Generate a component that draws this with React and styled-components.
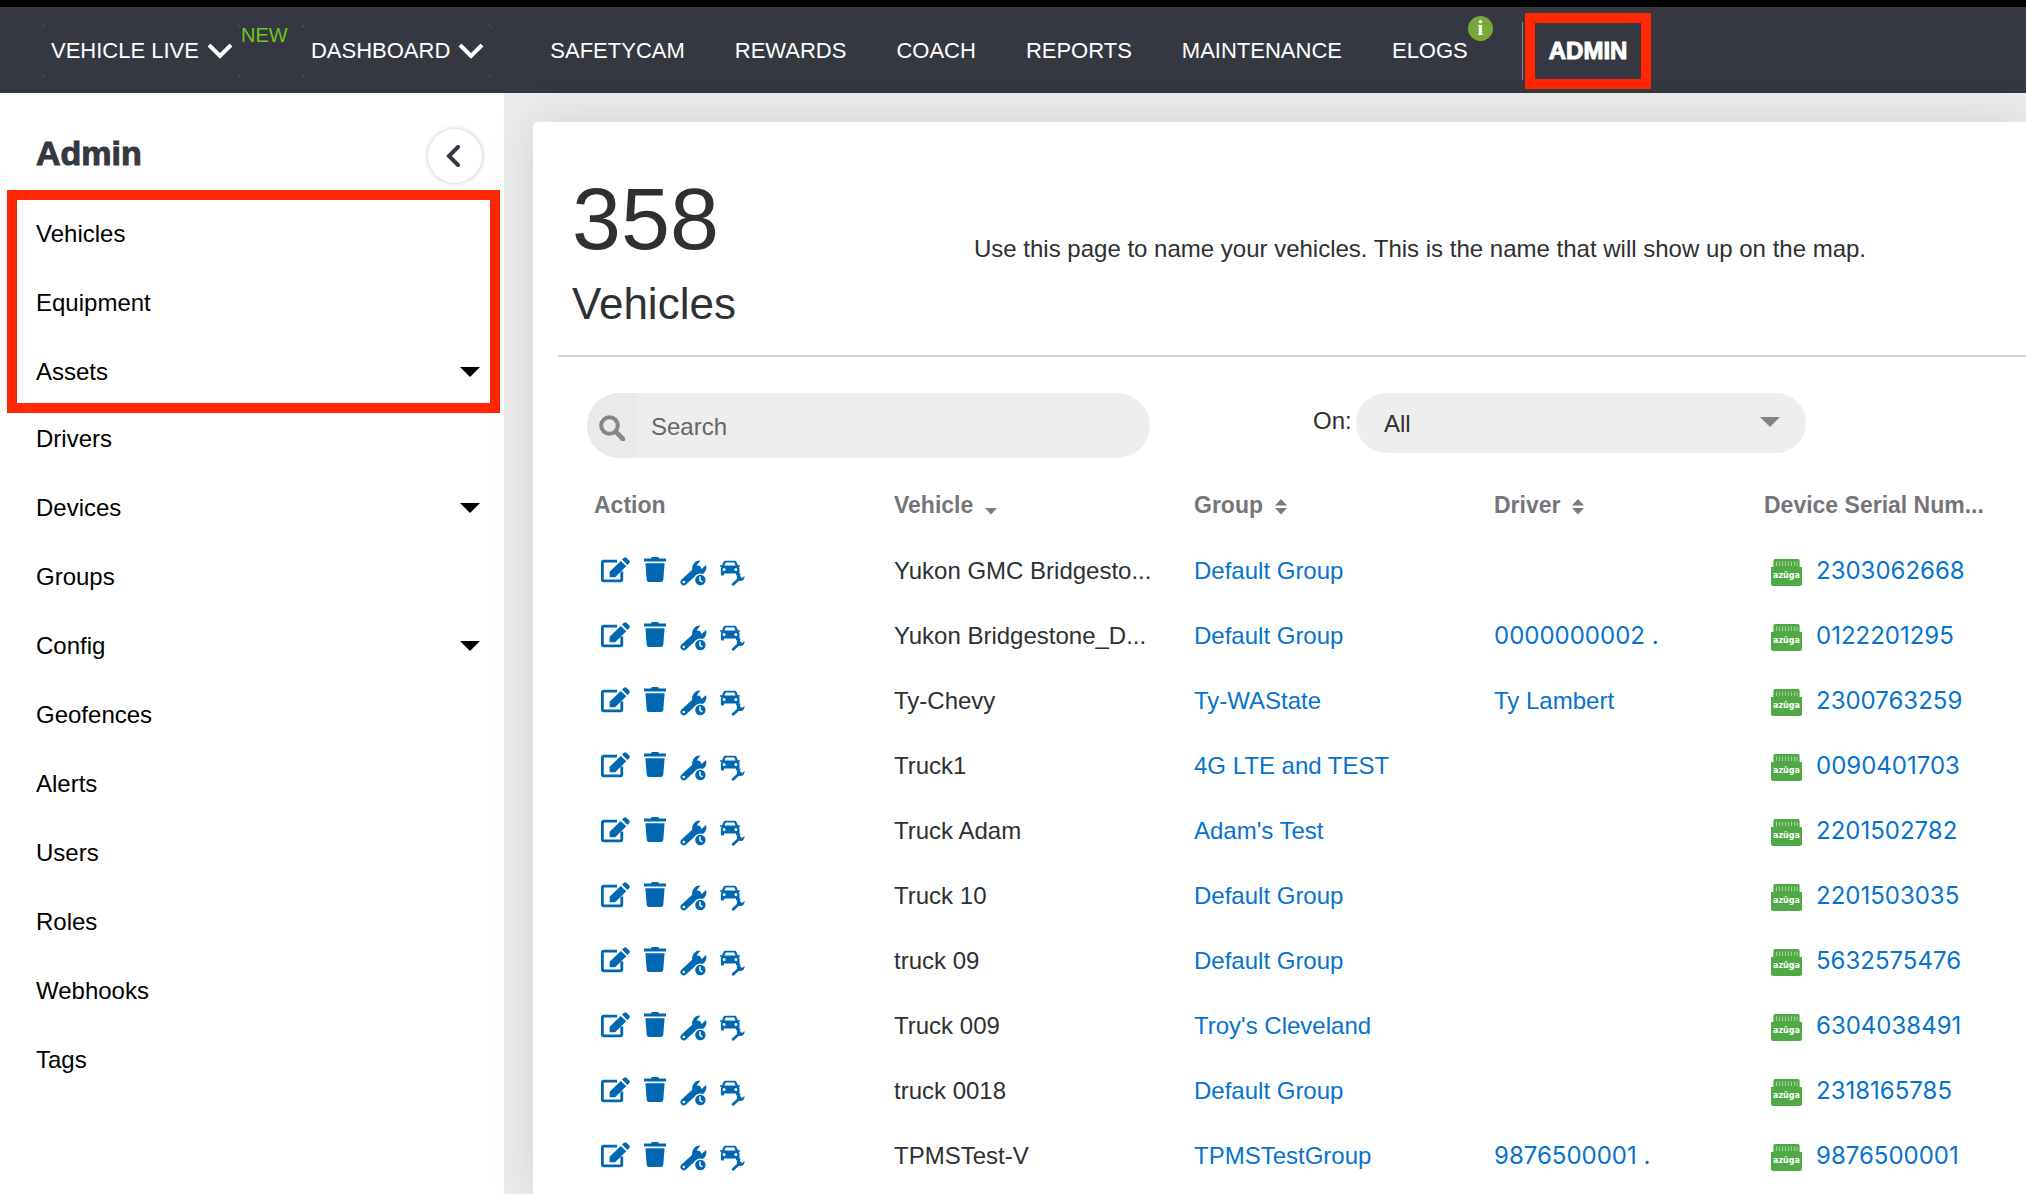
import { useState } from "react";
import styled, { createGlobalStyle } from "styled-components";

const GlobalStyle = createGlobalStyle`
  *, *::before, *::after {
    box-sizing: border-box;
  }

  body {
    margin: 0;
    font-family: "Liberation Sans", Arial, sans-serif;
    font-size: 24px;
    color: #2f3031;
    background: #e6e6e6;
  }

  button, input, select {
    font-family: inherit;
    font-size: inherit;
    color: inherit;
  }

  a {
    color: inherit;
    text-decoration: none;
  }
`;

const Page = styled.div`
  height: 100vh;
  display: flex;
  flex-direction: column;
  overflow: hidden;
`;

const TopBar = styled.nav`
  flex: none;
  height: 93px;
  padding: 2px 0 0 41px;
  display: flex;
  align-items: center;
  border-top: 7px solid #000;
  background: #363841;
  color: #fff;
  font-size: 22px;
  white-space: nowrap;
`;

const MenuButton = styled.button`
  position: relative;
  height: 54px;
  padding: 0 8px 0 10px;
  display: flex;
  align-items: center;
  gap: 8px;
  border: none;
  background: transparent;
  color: inherit;
  cursor: pointer;

  /* only the rounded corners of the outline are visible */
  &::before {
    content: "";
    position: absolute;
    inset: 0;
    border: 1px solid #5d5f67;
    border-radius: 5px;
    mask:
      linear-gradient(#000 0 0) 0 0 / 4px 4px no-repeat,
      linear-gradient(#000 0 0) 100% 0 / 4px 4px no-repeat,
      linear-gradient(#000 0 0) 0 100% / 4px 4px no-repeat,
      linear-gradient(#000 0 0) 100% 100% / 4px 4px no-repeat;
  }
`;

const NewTag = styled.span`
  align-self: flex-start;
  width: 60px;
  padding-top: 15px;
  font-size: 20px;
  line-height: 22px;
  color: #6fc420;
`;

const NavLinks = styled.div`
  margin-left: 58px;
  display: flex;
  align-items: center;
  gap: 50px;
`;

const NavLink = styled.a`
  position: relative;
`;

const InfoBadge = styled.span`
  position: absolute;
  left: 100%;
  top: -22px;
  width: 25px;
  height: 25px;
  border-radius: 50%;
  background: #76a93a;
  font: bold 20px/24px "Liberation Serif", serif;
  text-align: center;
`;

const AdminSlot = styled.div`
  margin-left: 54px;
  padding-left: 3px;
  height: 76px;
  display: flex;
  background: linear-gradient(#8a8b90 0 0) 0 50% / 1px 58px no-repeat;
`;

const AdminLink = styled.a`
  padding: 0 14px;
  display: flex;
  align-items: center;
  border: 10px solid #ff2803;
  font-size: 24px;
  font-weight: bold;
  -webkit-text-stroke: 1px #fff;
`;

const Body = styled.div`
  flex: 1;
  min-height: 0;
  display: flex;
`;

const Sidebar = styled.aside`
  flex: none;
  width: 504px;
  background: #fff;
`;

const SidebarHead = styled.div`
  height: 97px;
  padding: 22px 22px 0 36px;
  display: flex;
  justify-content: space-between;
  align-items: center;
`;

const SidebarTitle = styled.h1`
  margin: 0;
  font-size: 34px;
  line-height: 40px;
  color: #363841;
  -webkit-text-stroke: 1px #363841;
`;

const CollapseButton = styled.button`
  width: 54px;
  height: 54px;
  margin-top: 6px;
  padding: 0 4px 0 0;
  display: grid;
  place-items: center;
  border: none;
  border-radius: 50%;
  background: #fff;
  box-shadow: 0 0 5px rgba(0, 0, 0, 0.25);
  cursor: pointer;
`;

const MenuList = styled.ul`
  list-style: none;
  margin: -9px 0 0;
  padding: 0;
  color: #000;
`;

const Highlight = styled.div`
  margin: 0 4px 0 7px;
  border: 10px solid #ff2803;

  ${MenuList} {
    margin: -1px -14px -3px -17px;
  }
`;

const MenuItem = styled.a`
  height: 69px;
  padding: 0 24px 0 36px;
  display: flex;
  justify-content: space-between;
  align-items: center;
`;

const Content = styled.main`
  flex: 1;
  min-width: 0;
  padding: 29px 0 0 29px;
  background: #ececec;
  display: flex;
`;

const Card = styled.section`
  flex: 1;
  min-width: 0;
  padding-left: 25px;
  border-radius: 5px 0 0 0;
  background: #fff;
  box-shadow: 0 0 50px rgba(0, 0, 0, 0.11);
`;

const CardHead = styled.header`
  height: 235px;
  display: flex;
  align-items: center;
  padding: 20px 0 0 14px;
  border-bottom: 2px solid #d4d4d4;
`;

const Total = styled.div`
  width: 402px;
  padding-top: 20px;
  display: flex;
  flex-direction: column;
`;

const TotalCount = styled.strong`
  font-size: 88px;
  font-weight: normal;
  line-height: 90px;
`;

const TotalLabel = styled.span`
  font-size: 44px;
  line-height: 80px;
`;

const Filters = styled.div`
  height: 115px;
  padding: 36px 0 0 29px;
  display: flex;
  align-items: flex-start;
`;

const SearchBox = styled.label`
  width: 563px;
  height: 65px;
  display: flex;
  overflow: hidden;
  border-radius: 33px;
  background: #eee;
`;

const SearchIcon = styled.span`
  width: 50px;
  display: grid;
  place-items: center;
  padding-top: 4px;
  background: #eaeaea;
`;

const SearchInput = styled.input`
  flex: 1;
  min-width: 0;
  padding: 2px 14px 0;
  border: none;
  outline: none;
  background: transparent;

  &::placeholder {
    color: #666;
    opacity: 1;
  }
`;

const OnLabel = styled.label`
  margin-left: 163px;
  width: 43px;
  line-height: 56px;
`;

const SelectWrap = styled.div`
  position: relative;
  width: 450px;
`;

const Select = styled.select`
  appearance: none;
  width: 100%;
  height: 60px;
  padding: 0 28px;
  border: none;
  border-radius: 30px;
  background: #eee;
`;

const SelectArrow = styled.span`
  position: absolute;
  right: 26px;
  top: 24px;
  border: 10px solid transparent;
  border-top-color: #848484;
  border-bottom: none;
`;

const Caret = styled.span`
  border: 10px solid transparent;
  border-top-color: #000;
  border-bottom: none;
`;

const Table = styled.table`
  width: calc(100% - 36px);
  margin-left: 36px;
  border-collapse: collapse;
  table-layout: fixed;
`;

const Th = styled.th`
  width: ${({ $width }) => ($width ? `${$width}px` : "auto")};
  height: 66px;
  padding: 0;
  text-align: left;
  font-size: 23px;
  color: #757579;
  white-space: nowrap;

  svg {
    margin-left: 12px;
    vertical-align: -2px;
  }
`;

const Td = styled.td`
  height: 65px;
  padding: 0;
  font-family: ${({ $number }) => ($number ? "Inter, sans-serif" : "inherit")};
  white-space: nowrap;
`;

const DataLink = styled.a`
  color: #0673ce;
`;

const Serial = styled.div`
  display: flex;
  align-items: center;
  gap: 14px;
  padding-left: 7px;

  svg {
    margin-top: 4px;
  }
`;

const Actions = styled.div`
  display: flex;
  padding: 2px 0 0 7px;
`;

const ActionButton = styled.button`
  width: ${({ $width }) => $width}px;
  height: 29px;
  padding: 0;
  display: flex;
  align-items: ${({ $low }) => ($low ? "flex-end" : "flex-start")};
  border: none;
  background: transparent;
  color: #0068b3;
  cursor: pointer;
`;

const ChevronDown = () => (
  <svg width="26" height="16" viewBox="0 0 26 16" aria-hidden="true">
    <path d="M2 2l11 11L24 2" fill="none" stroke="#fff" strokeWidth="4" />
  </svg>
);

const ChevronLeft = () => (
  <svg width="14" height="22" viewBox="0 0 14 22" aria-hidden="true">
    <path d="M12 2L3 11l9 9" fill="none" stroke="#363841" strokeWidth="4" strokeLinecap="round" />
  </svg>
);

const SearchGlyph = () => (
  <svg width="26" height="26" viewBox="0 0 26 26" fill="none" stroke="#868686" aria-hidden="true">
    <circle cx="10.5" cy="10.5" r="8.3" strokeWidth="4" />
    <path d="M17 17l7 7" strokeWidth="4.6" strokeLinecap="round" />
  </svg>
);

const EditIcon = () => (
  <svg width="29" height="26" viewBox="0 0 29 26" aria-hidden="true">
    <path d="M16 4.2H2.6Q1.4 4.2 1.4 5.4v17.2q0 1.2 1.2 1.2h17q1.2 0 1.2-1.2V14.5" fill="none" stroke="currentColor" strokeWidth="2.8" />
    <path d="M8.6 14.8L19.8 3.9l5.5 5.4-11.2 10.9H8.6z" fill="currentColor" />
    <path d="M21 2.6L23 .7q1.2-1 2.4 0l2.9 2.9q1 1.2 0 2.4l-1.9 1.9z" fill="currentColor" />
  </svg>
);

const TrashIcon = () => (
  <svg width="22" height="25" viewBox="0 0 22 25" fill="currentColor" aria-hidden="true">
    <path d="M0 1.4h7L7.8 0h6.4l.8 1.4h7v3.2H0z" />
    <path d="M1.4 6.2h19.2l-1.3 16.5q-.2 2.3-2.5 2.3H5.2q-2.3 0-2.5-2.3z" />
  </svg>
);

const WrenchClockIcon = () => (
  <svg width="27" height="26" viewBox="0 0 27 26" aria-hidden="true">
    <path d="M3.8 22L18 9" stroke="currentColor" strokeWidth="6.6" strokeLinecap="round" />
    <path d="M20.5 0.4a8 8 0 0 0-8.1 10.1l4.9 4.7A7.8 7.8 0 0 0 26 5.1l-4.7 4.2-3.5-.8-.9-3.6z" fill="currentColor" />
    <circle cx="3.8" cy="22" r="1.3" fill="#fff" />
    <circle cx="20.4" cy="20" r="6.6" fill="#fff" />
    <circle cx="20.4" cy="20" r="5.2" fill="currentColor" />
    <path d="M20 16.6v3.8l2.4 1.4" fill="none" stroke="#fff" strokeWidth="1.5" />
  </svg>
);

const CarWrenchIcon = () => (
  <svg width="25" height="26" viewBox="0 0 25 26" aria-hidden="true">
    <path fillRule="evenodd" fill="currentColor" d="M5.2.8h9.6q1.2 0 1.7 1.2l1.4 3.2h2v1.6h-1.3q.9.8.9 2v5.6q0 1-1 1h-1.6q-1 0-1-1v-1H4.1v1q0 1-1 1H1.900q-1 0-1-1V8.800q0-1.200.9-2H0V5.200h2l1.500-3.200Q4 .8 5.200.8zM5.700 2.600L4.500 5.600h11l-1.200-3zM4.100 8a1.500 1.500 0 1 0 0 3 1.500 1.500 0 0 0 0-3zm11.800 0a1.500 1.500 0 1 0 0 3 1.500 1.500 0 0 0 0-3z" />
    <path d="M12.400 25L20 18" stroke="#fff" strokeWidth="5" />
    <path d="M13.200 24.200L20 18" stroke="currentColor" strokeWidth="2.800" strokeLinecap="round" />
    <path d="M20.800 13.400a4 4 0 0 0-3.800 5.200l2.300 2.100a4 4 0 0 0 5.200-4.600l-2.400 2-1.800-.6-.4-1.900z" fill="currentColor" />
  </svg>
);

const BadgeSvg = styled.svg`
  flex: none;
  font: bold 8px "DejaVu Sans", sans-serif;
`;

const DeviceIcon = () => (
  <BadgeSvg width="31" height="27" viewBox="0 0 31 27" aria-hidden="true">
    <path d="M4 0h23q1.600 0 1.600 1.600V8H31v16.500q0 2.500-2.500 2.500h-26Q0 27 0 24.500V8h2.400V1.600Q2.400 0 4 0z" fill="#4fa944" />
    <path d="M5.500 2.500V7M8.500 2.500V7M11.500 2.500V7M14.500 2.500V7M17.500 2.500V7M20.500 2.500V7M23.500 2.500V7M26 2.500V7" stroke="#a5d29f" strokeWidth="1" />
    <text x="15.500" y="19" textAnchor="middle" fill="#fff">azûga</text>
  </BadgeSvg>
);

const SortIcon = ({ descending }) => (
  <svg width="12" height="16" viewBox="0 0 12 16" fill="#7b7b7f" aria-hidden="true">
    {!descending && <path d="M6 0l6 6.500H0z" />}
    <path d="M0 9h12l-6 6.500z" />
  </svg>
);

const NAV = ["SAFETYCAM", "REWARDS", "COACH", "REPORTS", "MAINTENANCE"];

const MAIN_MENU = [{ name: "Vehicles" }, { name: "Equipment" }, { name: "Assets", expandable: true }];

const MORE_MENU = [
  { name: "Drivers" },
  { name: "Devices", expandable: true },
  { name: "Groups" },
  { name: "Config", expandable: true },
  { name: "Geofences" },
  { name: "Alerts" },
  { name: "Users" },
  { name: "Roles" },
  { name: "Webhooks" },
  { name: "Tags" },
];

const VEHICLES = [
  { name: "Yukon GMC Bridgesto...", group: "Default Group", driver: "", serial: "2303062668" },
  { name: "Yukon Bridgestone_D...", group: "Default Group", driver: "0000000002 .", serial: "0122201295" },
  { name: "Ty-Chevy", group: "Ty-WAState", driver: "Ty Lambert", serial: "2300763259" },
  { name: "Truck1", group: "4G LTE and TEST", driver: "", serial: "0090401703" },
  { name: "Truck Adam", group: "Adam's Test", driver: "", serial: "2201502782" },
  { name: "Truck 10", group: "Default Group", driver: "", serial: "2201503035" },
  { name: "truck 09", group: "Default Group", driver: "", serial: "5632575476" },
  { name: "Truck 009", group: "Troy's Cleveland", driver: "", serial: "6304038491" },
  { name: "truck 0018", group: "Default Group", driver: "", serial: "2318165785" },
  { name: "TPMSTest-V", group: "TPMSTestGroup", driver: "9876500001 .", serial: "9876500001" },
];

function SideMenu({ items }) {
  return (
    <MenuList>
      {items.map((item) => (
        <li key={item.name}>
          <MenuItem href="#">
            {item.name}
            {item.expandable && <Caret />}
          </MenuItem>
        </li>
      ))}
    </MenuList>
  );
}

function VehicleRow({ vehicle }) {
  return (
    <tr>
      <Td>
        <Actions>
          <ActionButton $width={43} aria-label="Edit"><EditIcon /></ActionButton>
          <ActionButton $width={36} aria-label="Delete"><TrashIcon /></ActionButton>
          <ActionButton $width={40} $low aria-label="Service reminder"><WrenchClockIcon /></ActionButton>
          <ActionButton $width={25} $low aria-label="Maintenance"><CarWrenchIcon /></ActionButton>
        </Actions>
      </Td>
      <Td>{vehicle.name}</Td>
      <Td><DataLink href="#">{vehicle.group}</DataLink></Td>
      <Td $number={/^\d/.test(vehicle.driver)}>
        {vehicle.driver && <DataLink href="#">{vehicle.driver}</DataLink>}
      </Td>
      <Td $number>
        <Serial>
          <DeviceIcon />
          <DataLink href="#">{vehicle.serial}</DataLink>
        </Serial>
      </Td>
    </tr>
  );
}

export default function App() {
  const [search, setSearch] = useState("");

  return (
    <Page>
      <GlobalStyle />
      <TopBar>
        <MenuButton>VEHICLE LIVE <ChevronDown /></MenuButton>
        <NewTag>NEW</NewTag>
        <MenuButton>DASHBOARD <ChevronDown /></MenuButton>
        <NavLinks>
          {NAV.map((name) => (
            <NavLink key={name} href="#">{name}</NavLink>
          ))}
          <NavLink href="#">ELOGS<InfoBadge>i</InfoBadge></NavLink>
        </NavLinks>
        <AdminSlot>
          <AdminLink href="#">ADMIN</AdminLink>
        </AdminSlot>
      </TopBar>

      <Body>
        <Sidebar>
          <SidebarHead>
            <SidebarTitle>Admin</SidebarTitle>
            <CollapseButton aria-label="Collapse menu"><ChevronLeft /></CollapseButton>
          </SidebarHead>
          <Highlight>
            <SideMenu items={MAIN_MENU} />
          </Highlight>
          <SideMenu items={MORE_MENU} />
        </Sidebar>

        <Content>
          <Card>
            <CardHead>
              <Total>
                <TotalCount>358</TotalCount>
                <TotalLabel>Vehicles</TotalLabel>
              </Total>
              <span>Use this page to name your vehicles. This is the name that will show up on the map.</span>
            </CardHead>
            <Filters>
              <SearchBox>
                <SearchIcon><SearchGlyph /></SearchIcon>
                <SearchInput aria-label="Search" placeholder="Search" value={search} onChange={(e) => setSearch(e.target.value)} />
              </SearchBox>
              <OnLabel htmlFor="on-filter">On:</OnLabel>
              <SelectWrap>
                <Select id="on-filter"><option>All</option></Select>
                <SelectArrow />
              </SelectWrap>
            </Filters>
            <Table>
              <thead>
                <tr>
                  <Th $width={300}>Action</Th>
                  <Th $width={300}>Vehicle<SortIcon descending /></Th>
                  <Th $width={300}>Group<SortIcon /></Th>
                  <Th $width={270}>Driver<SortIcon /></Th>
                  <Th>Device Serial Num...</Th>
                </tr>
              </thead>
              <tbody>
                {VEHICLES.map((vehicle) => (
                  <VehicleRow key={vehicle.name} vehicle={vehicle} />
                ))}
              </tbody>
            </Table>
          </Card>
        </Content>
      </Body>
    </Page>
  );
}
